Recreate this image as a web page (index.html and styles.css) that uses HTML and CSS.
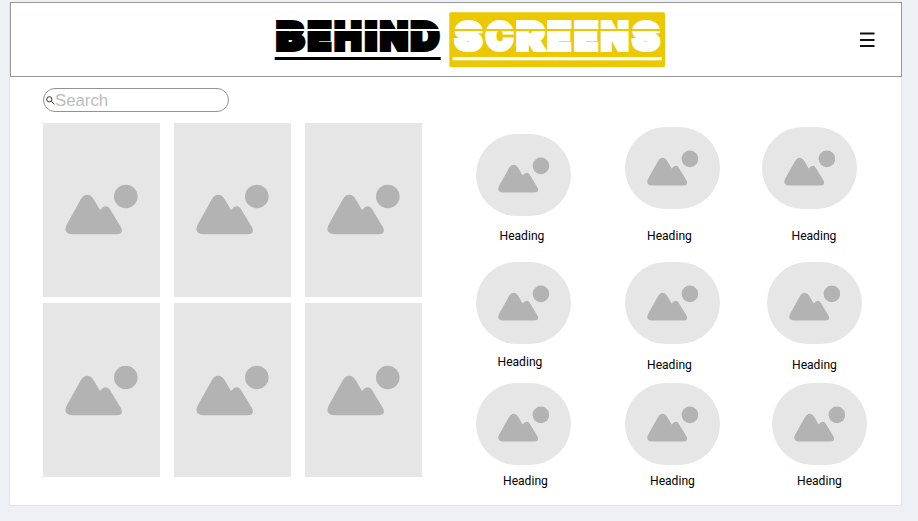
FILE: index.html
```html
<!DOCTYPE html>
<html lang="en">
<head>
<meta charset="utf-8">
<title>Behind Screens</title>
<link rel="stylesheet" href="styles.css">
</head>
<body>
<svg width="0" height="0" class="defs" aria-hidden="true">
  <symbol id="picture" viewBox="0 0 73 51">
    <circle cx="60.8" cy="12.5" r="11.8"/>
    <path d="M1.6 40.800 15.500 15.800Q18.300 10.800 22.200 10.800T29 15.800L35 26.100Q37.800 22.300 40.700 22.300T45.400 25.800L56 43.300Q59 50.300 51.500 50.300H7.500Q-2.500 49.800 1.600 40.800Z"/>
  </symbol>
</svg>
<div class="page">
  <header class="header">
    <svg class="logo" width="392" height="56" viewBox="274 12 392 56" role="img">
      <text class="word dark" y="50"><tspan x="276.300" textLength="28" lengthAdjust="spacingAndGlyphs">B</tspan><tspan x="307.800" textLength="23.500" lengthAdjust="spacingAndGlyphs">E</tspan><tspan x="334.500" textLength="27" lengthAdjust="spacingAndGlyphs">H</tspan><tspan x="365" textLength="12" lengthAdjust="spacingAndGlyphs">I</tspan><tspan x="380" textLength="28" lengthAdjust="spacingAndGlyphs">N</tspan><tspan x="410.800" textLength="28.500" lengthAdjust="spacingAndGlyphs">D</tspan></text>
      <rect class="paper" x="275" y="29" width="166" height="2"/>
      <rect x="274.700" y="57" width="166" height="3"/>
      <rect class="gold" x="449.300" y="12.300" width="215.700" height="54.700" rx="1.500"/>
      <text class="word light" y="50"><tspan x="455" textLength="27" lengthAdjust="spacingAndGlyphs">S</tspan><tspan x="486" textLength="27" lengthAdjust="spacingAndGlyphs">C</tspan><tspan x="516.500" textLength="28" lengthAdjust="spacingAndGlyphs">R</tspan><tspan x="547.500" textLength="23.500" lengthAdjust="spacingAndGlyphs">E</tspan><tspan x="574.500" textLength="23.500" lengthAdjust="spacingAndGlyphs">E</tspan><tspan x="601" textLength="27.500" lengthAdjust="spacingAndGlyphs">N</tspan><tspan x="632.500" textLength="27" lengthAdjust="spacingAndGlyphs">S</tspan></text>
      <rect class="gold" x="453" y="29" width="209" height="2"/>
      <rect class="paper" x="452.700" y="57" width="209.300" height="3.300"/>
    </svg>
    <svg class="menu" width="15" height="16" viewBox="0 0 15 16"><path d="M0 1.500H14.500M0 8H14.500M0 14H14.500"/></svg>
  </header>
  <main class="main">
    <section class="left">
      <label class="search">
        <svg width="9" height="9" viewBox="0 0 9 9"><circle cx="3.300" cy="3.300" r="2.600"/><path d="M5.300 5.300 8.300 8.300"/></svg>
        <span>Search</span>
      </label>
      <div class="cards">
        <div class="card"><svg><use href="#picture"/></svg></div>
        <div class="card"><svg><use href="#picture"/></svg></div>
        <div class="card"><svg><use href="#picture"/></svg></div>
        <div class="card"><svg><use href="#picture"/></svg></div>
        <div class="card"><svg><use href="#picture"/></svg></div>
        <div class="card"><svg><use href="#picture"/></svg></div>
      </div>
    </section>
    <section class="people">
      <article class="person a1"><div class="avatar"><svg><use href="#picture"/></svg></div><h3>Heading</h3></article>
      <article class="person a2"><div class="avatar"><svg><use href="#picture"/></svg></div><h3>Heading</h3></article>
      <article class="person a3"><div class="avatar"><svg><use href="#picture"/></svg></div><h3>Heading</h3></article>
      <article class="person b1"><div class="avatar"><svg><use href="#picture"/></svg></div><h3>Heading</h3></article>
      <article class="person b2"><div class="avatar"><svg><use href="#picture"/></svg></div><h3>Heading</h3></article>
      <article class="person b3"><div class="avatar"><svg><use href="#picture"/></svg></div><h3>Heading</h3></article>
      <article class="person c1"><div class="avatar"><svg><use href="#picture"/></svg></div><h3>Heading</h3></article>
      <article class="person c2"><div class="avatar"><svg><use href="#picture"/></svg></div><h3>Heading</h3></article>
      <article class="person c3"><div class="avatar"><svg><use href="#picture"/></svg></div><h3>Heading</h3></article>
    </section>
  </main>
</div>
</body>
</html>
```
FILE: styles.css
```css
* { box-sizing: border-box; }
body {
  margin: 0;
  padding: 2px 16px 0 9px;
  height: 521px;
  overflow: hidden;
  background: #edf0f5;
  font-family: Roboto, "Liberation Sans", sans-serif;
}
.defs { display: block; }
.page {
  height: 504px;
  background: #fff;
  border: solid #e1e4e8;
  border-width: 0 1px 1px;
}
.header {
  display: flex;
  align-items: flex-start;
  height: 75px;
  margin: 0 -1px 0 0;
  border: 1px solid #989898;
}
.logo { flex: none; margin: 9px 0 0 263px; overflow: visible; }
.word {
  font: 900 39px Inter, sans-serif;
  stroke-width: 4px;
  stroke-linejoin: miter;
  stroke-miterlimit: 2;
}
.dark { fill: #000; stroke: #000; }
.light { fill: #fff; stroke: #fff; }
.paper { fill: #fff; }
.gold { fill: #ecc800; }
.menu { flex: none; margin: 29px 0 0 194px; stroke: #111; stroke-width: 2; }
.main { display: flex; align-items: flex-start; }
.left { width: 379px; margin: 11px 0 0 33px; }
.search {
  display: flex;
  align-items: center;
  width: 186px;
  height: 24px;
  padding-left: 2px;
  border: 1px solid #929292;
  border-radius: 12px;
  color: #bcbcbc;
  font: 16.800px/18px "Liberation Sans", sans-serif;
}
.search span { padding-top: 1px; }
.search svg { fill: none; stroke: #333; stroke-width: 1; }
.cards {
  display: grid;
  grid-template-columns: repeat(3, 117px);
  grid-template-rows: repeat(2, 174px);
  gap: 6.500px 14px;
  margin: 10.700px 0 0 0.400px;
}
.card, .avatar {
  display: flex;
  align-items: center;
  justify-content: center;
  background: #e6e6e6;
  fill: #b3b3b3;
}
.card svg { width: 73px; height: 51px; }
.people {
  display: grid;
  grid-template-columns: 149px 137px 120px;
  grid-template-rows: 135px 120.500px 110px;
  margin: 50px 0 0 54px;
}
.avatar { width: 95.300px; height: 82.300px; border-radius: 41px; }
.avatar svg { width: 51.500px; height: 36px; }
.person h3 {
  margin: 13px 0 0 23.500px;
  font-size: 12.100px;
  font-weight: 400;
  line-height: 14px;
  color: #000;
}
.a1 { padding-top: 6.500px; }
.b1 h3 { margin: 11px 0 0 21.500px; }
.a2 h3, .a3 h3 { margin: 20px 0 0 22px; }
.b2 h3, .b3 h3 { margin: 14px 0 0 22px; }
.a3 h3 { margin-left: 29.500px; }
.b3 { padding-left: 5px; }
.b3 h3 { margin-left: 25px; }
.c1 h3, .c2 h3, .c3 h3 { margin: 9px 0 0 27px; }
.c2 h3, .c3 h3 { margin-left: 25px; }
.c3 { padding-left: 10px; }
```
